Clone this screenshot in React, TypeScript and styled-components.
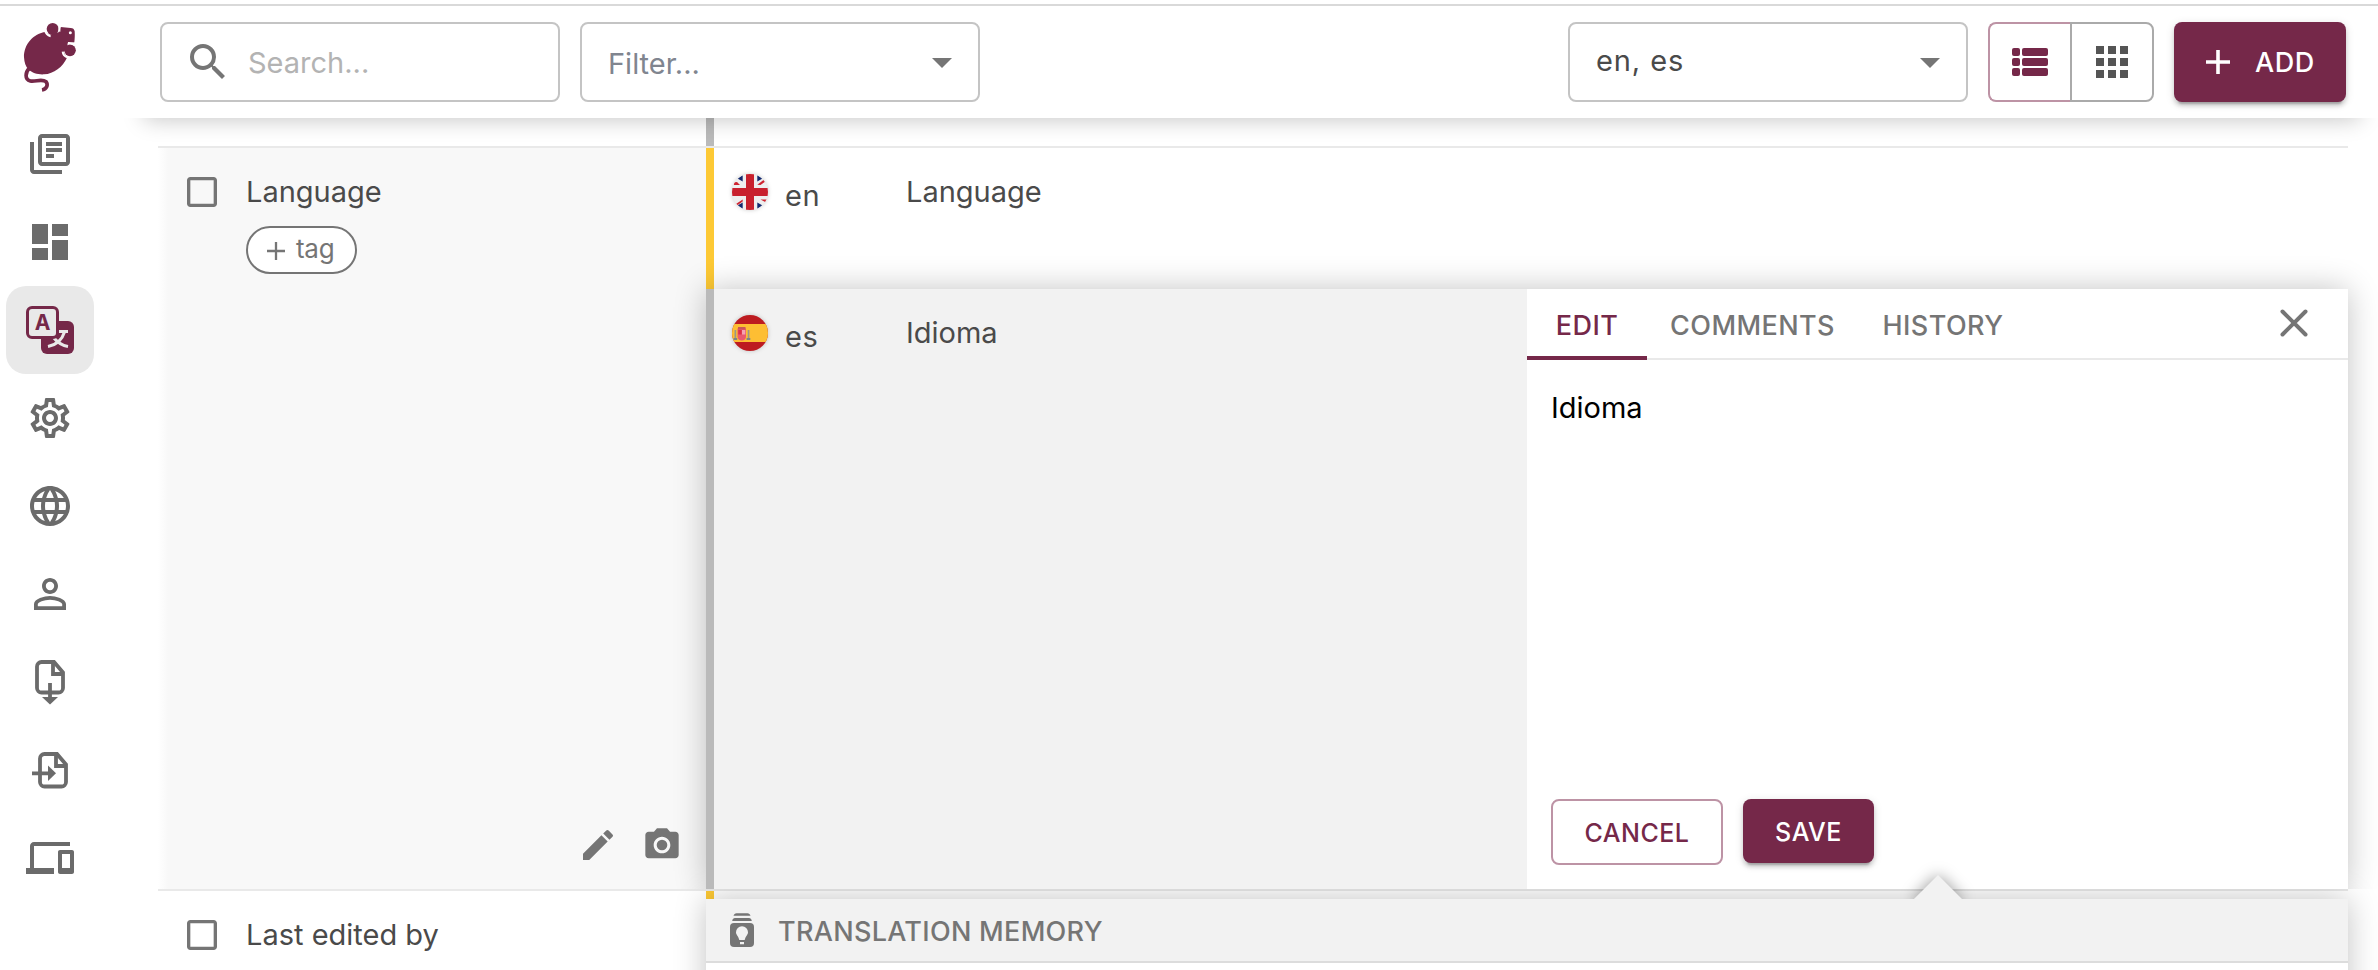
import React from 'react';
import styled, { createGlobalStyle, css } from 'styled-components';
import {
  MdApps,
  MdArrowDropDown,
  MdCameraAlt,
  MdCheckBoxOutlineBlank,
  MdDashboard,
  MdDevices,
  MdEdit,
  MdLanguage,
  MdOutlineLibraryBooks,
  MdOutlineSettings,
  MdPersonOutline,
  MdSearch,
} from 'react-icons/md';

const color = {
  primary: '#752849',
  primarySoft: '#bd93a5',
  icon: '#6b6b6b',
  muted: '#757575',
  text: '#4a4a4a',
  border: '#c4c4c4',
  divider: '#e9e9e9',
  keyCell: '#f8f8f8',
  selected: '#f2f2f2',
  translated: '#fdc935',
  reviewed: '#bababa',
};

const GlobalStyle = createGlobalStyle`
  *, *::before, *::after { box-sizing: border-box; }
  body {
    margin: 0;
    background: #fff;
    color: ${color.text};
    font-family: Inter, "Liberation Sans", sans-serif;
    font-size: 29px;
    line-height: 40px;
  }
`;

const Page = styled.div`
  display: flex;
  flex-direction: column;
  height: 970px;
  overflow: hidden;
  padding-top: 4px;
`;

const TopRule = styled.div`
  flex: none;
  height: 2px;
  background: #d9d9d9;
`;

const Shell = styled.div`
  display: flex;
  flex: 1;
  min-height: 0;
`;

/* Sidebar */

const Sidebar = styled.nav`
  flex: none;
  width: 100px;
  display: flex;
  flex-direction: column;
  align-items: center;
`;

const LogoBox = styled.div`
  height: 104px;
  padding-top: 4px;
  svg { display: block; }
`;

const MenuItem = styled.a<{ $active?: boolean }>`
  width: 88px;
  height: 88px;
  flex: none;
  display: flex;
  align-items: center;
  justify-content: center;
  border-radius: 20px;
  color: ${(p) => (p.$active ? color.primary : color.icon)};
  background: ${(p) => (p.$active ? '#e9e9e9' : 'transparent')};
`;

/* Toolbar */

const Main = styled.main`
  flex: 1;
  min-width: 0;
  display: flex;
  flex-direction: column;
`;

const Toolbar = styled.header`
  position: relative;
  z-index: 5;
  flex: none;
  height: 112px;
  padding: 16px 32px 16px 60px;
  display: flex;
  gap: 20px;
  background: #fff;
`;

const ShadowStrip = styled.div`
  position: absolute;
  top: 100%;
  left: 0;
  right: 0;
  height: 28px;
  overflow: hidden;
  pointer-events: none;
`;

const ShadowCaster = styled.div`
  height: 40px;
  margin: -40px 18px 0 44px;
  box-shadow: 0 2px 22px rgba(0, 0, 0, 0.22);
`;

const Field = styled.div<{ $push?: boolean }>`
  width: 400px;
  height: 80px;
  display: flex;
  align-items: center;
  border: 2px solid ${color.border};
  border-radius: 8px;
  ${(p) => p.$push && css`margin-left: auto;`}
`;

const SearchField = styled(Field)`
  padding-left: 22px;
  gap: 16px;
  color: ${color.muted};
`;

const SelectField = styled(Field)`
  padding: 0 12px 0 26px;
  justify-content: space-between;
  color: ${color.muted};
`;

const FieldText = styled.span<{ $color: string; $shift?: number; $spacing?: number }>`
  line-height: 40px;
  color: ${(p) => p.$color};
  letter-spacing: ${(p) => p.$spacing ?? 0}px;
  transform: translateY(${(p) => p.$shift ?? 0}px);
`;

const ToggleGroup = styled.div`
  display: flex;
  width: 166px;
`;

const ToggleButton = styled.button<{ $active?: boolean }>`
  width: ${(p) => (p.$active ? 82 : 84)}px;
  display: flex;
  align-items: center;
  justify-content: center;
  padding: 0;
  background: #fff;
  border: 2px solid ${(p) => (p.$active ? color.primarySoft : '#aaa')};
  color: ${(p) => (p.$active ? color.primary : '#555')};
  border-radius: ${(p) => (p.$active ? '8px 0 0 8px' : '0 8px 8px 0')};
  ${(p) => p.$active && css`border-right: 0;`}
`;

const buttonType = css`
  font-family: inherit;
  font-weight: 450;
  font-size: 25px;
  line-height: 40px;
  letter-spacing: 0.5px;
  border-radius: 8px;
`;

const raised = css`
  border: 0;
  color: #fff;
  background: ${color.primary};
  box-shadow: 0 6px 2px -4px rgba(0, 0, 0, 0.2), 0 4px 4px rgba(0, 0, 0, 0.14),
    0 2px 10px rgba(0, 0, 0, 0.12);
`;

const AddButton = styled.button`
  ${buttonType}
  ${raised}
  width: 172px;
  height: 80px;
  padding: 0 0 0 32px;
  font-size: 27px;
  display: flex;
  align-items: center;
  gap: 25px;
`;

const AddLabel = styled.span`
  padding-top: 2px;
`;

/* Translation table */

const Table = styled.div`
  flex: 1;
  margin: 0 30px 0 58px;
`;

const KeyRow = styled.section<{ $height: number }>`
  position: relative;
  height: ${(p) => p.$height}px;
  display: grid;
  grid-template-columns: 548px 1fr;
  border-bottom: 2px solid ${color.divider};
`;

const KeyCell = styled.div<{ $active?: boolean }>`
  display: flex;
  flex-direction: column;
  justify-content: space-between;
  ${(p) =>
    p.$active &&
    css`background: linear-gradient(90deg, #fff, ${color.keyCell} 10px);`}
`;

const KeyHead = styled.div`
  display: flex;
  align-items: flex-start;
  padding: 24px 0 0 24px;
  gap: 24px;
  svg { display: block; color: ${color.muted}; }
`;

const KeyInfo = styled.div`
  display: flex;
  flex-direction: column;
  align-items: flex-start;
`;

const KeyName = styled.span`
  line-height: 40px;
`;

const TagButton = styled.button`
  margin-top: 14px;
  width: 111px;
  height: 48px;
  padding: 0 0 3px 19px;
  display: flex;
  align-items: center;
  gap: 11px;
  border: 2px solid ${color.muted};
  border-radius: 24px;
  background: #fff;
  color: ${color.muted};
  font: inherit;
  font-size: 26px;
  line-height: 36px;
  letter-spacing: -0.3px;
  svg { margin-top: 4px; }
`;

const KeyActions = styled.div`
  display: flex;
  justify-content: flex-end;
  gap: 24px;
  padding: 0 24px 24px 0;
  color: ${color.muted};
`;

const Translations = styled.div`
  display: flex;
  flex-direction: column;
`;

const Translation = styled.article<{ $state: string; $height: number; $selected?: boolean }>`
  height: ${(p) => p.$height}px;
  display: flex;
  border-left: 8px solid ${(p) => p.$state};
  ${(p) =>
    p.$selected &&
    css`
      position: relative;
      z-index: 2;
      background: ${color.selected};
      box-shadow: 0 0 30px rgba(0, 0, 0, 0.24);
      clip-path: inset(-40px -40px 0 -40px);
    `}
`;

const Language = styled.div`
  width: 174px;
  height: 36px;
  margin: 26px 0 0 18px;
  display: flex;
  gap: 17px;
  svg { display: block; filter: drop-shadow(0 0 2px rgba(0, 0, 0, 0.2)); }
`;

const LangCode = styled.span`
  margin-top: 2px;
  letter-spacing: 0.5px;
`;

const Value = styled.span`
  flex: 1;
  margin-top: 24px;
`;

/* Editor */

const Editor = styled.div`
  width: 821px;
  display: flex;
  flex-direction: column;
  background: #fff;
`;

const TabBar = styled.div`
  height: 71px;
  display: flex;
  align-items: stretch;
  border-bottom: 2px solid ${color.divider};
`;

const Tab = styled.button<{ $active?: boolean; $width: number }>`
  width: ${(p) => p.$width}px;
  height: 71px;
  padding: 6px 0 0;
  border: 0;
  border-bottom: 4px solid ${(p) => (p.$active ? color.primary : 'transparent')};
  background: none;
  color: ${(p) => (p.$active ? color.primary : color.muted)};
  font: inherit;
  font-weight: 450;
  font-size: 27px;
  letter-spacing: 0.4px;
`;

const CloseButton = styled.button`
  margin: 19px 39px 0 auto;
  width: 30px;
  height: 30px;
  padding: 0;
  border: 0;
  background: none;
  color: ${color.muted};
  svg { display: block; }
`;

const EditorText = styled.div`
  flex: 1;
  padding: 28px 24px;
  color: #000;
`;

const EditorActions = styled.div`
  display: flex;
  align-items: flex-start;
  gap: 20px;
  padding: 0 24px 24px;
`;

const CancelButton = styled.button`
  ${buttonType}
  width: 172px;
  height: 66px;
  padding: 1px 0 0;
  background: #fff;
  color: ${color.primary};
  border: 2px solid ${color.primarySoft};
`;

const SaveButton = styled.button`
  ${buttonType}
  ${raised}
  width: 131px;
  height: 64px;
  padding: 2px 0 0;
`;

/* Tools popup */

const ToolsPopup = styled.aside`
  position: absolute;
  z-index: 1;
  top: 8px;
  left: 548px;
  right: 0;
  height: 120px;
  background: #fff;
  box-shadow: 0 0 30px rgba(0, 0, 0, 0.24);
`;

const ToolsHeader = styled.div`
  height: 64px;
  display: flex;
  align-items: center;
  gap: 24px;
  padding-left: 24px;
  background: ${color.selected};
  border-bottom: 2px solid #dcdcdc;
  color: ${color.muted};
  font-weight: 450;
  font-size: 27px;
  letter-spacing: 0.3px;
`;

const ToolsTitle = styled.span`
  padding-top: 3px;
`;

const ArrowClip = styled.div`
  position: absolute;
  z-index: 3;
  top: -36px;
  left: 1730px;
  width: 100px;
  height: 44px;
  overflow: hidden;
  &::after {
    content: '';
    position: absolute;
    left: 33px;
    top: 27px;
    width: 34px;
    height: 34px;
    background: ${color.selected};
    transform: rotate(45deg);
    box-shadow: 0 0 16px rgba(0, 0, 0, 0.4);
  }
`;

const MouseLogo = () => (
  <svg width="100" height="100" viewBox="0 0 300 300" fill={color.primary}>
    <path d="M137 66C100 70 71 104 72 142c1 16 5 28 13 36 12 12 30 16 47 15 30-2 56-22 69-50l-10-16 12-22c-2-4 0-7 3-7l17-1c1-8 2-20 1-33-2-7-5-10-12-10l-30-3-6 16-30 8z" />
    <circle cx="158" cy="57" r="18" />
    <circle cx="210" cy="121" r="17.5" />
    <path d="M136 63c1 8 6 13 16 16M179 46l-1 19M188 125c1 9 6 14 13 17M204 99c7-1 14 1 20 5" fill="none" stroke="#fff" strokeWidth="6" />
    <circle cx="211" cy="68" r="4.5" fill="#fff" />
    <path d="M88 175C76 186 73 208 91 213c16 3 34-8 47 2 8 11 1 23-12 25" fill="none" stroke={color.primary} strokeWidth="11" />
  </svg>
);

const TranslateIcon = () => (
  <svg width="48" height="48" viewBox="0 0 48 48">
    <rect x="15" y="15" width="33" height="33" rx="6" fill="currentColor" />
    <g fill="none" stroke="#e9e9e9" strokeWidth="3">
      <path d="M29 25.500H42" />
      <path d="M38.500 26C36 34 30 39 22 40.500" />
      <path d="M27 31c4 5 9 8.500 15 9.500" />
    </g>
    <rect x="1.500" y="1.500" width="30" height="30" rx="4.500" fill="#e9e9e9" stroke="currentColor" strokeWidth="3" />
    <text x="16.500" y="24" textAnchor="middle" fontSize="21" fontWeight="700" fill="currentColor">A</text>
  </svg>
);

const ExportIcon = () => (
  <svg width="48" height="48" viewBox="0 0 48 48">
    <g fill="none" stroke="currentColor" strokeWidth="3.800">
      <path d="M15.500 4H28l9 10.500V30a4.500 4.500 0 0 1-4.500 4.500h-17A4.500 4.500 0 0 1 11 30V8.500A4.500 4.500 0 0 1 15.500 4z" />
      <path d="M27 4v12h10M24 25v15" />
    </g>
    <path d="M16 39h16l-8 7.500z" fill="currentColor" />
  </svg>
);

const ImportIcon = () => (
  <svg width="48" height="48" viewBox="0 0 48 48">
    <g fill="none" stroke="currentColor" strokeWidth="3.800">
      <path d="M18.500 8H31l9 10.500V36a4.500 4.500 0 0 1-4.500 4.500h-17A4.500 4.500 0 0 1 14 36V12.500A4.500 4.500 0 0 1 18.500 8z" />
      <path d="M30 8v12h10M6 27.300h18" />
    </g>
    <path d="M22 19.500v15.500l8-7.700z" fill="currentColor" />
  </svg>
);

const ListIcon = () => (
  <svg width="36" height="28" viewBox="0 0 36 28" fill="currentColor">
    {[0, 10, 20].map((y) => (
      <React.Fragment key={y}>
        <rect x="0" y={y} width="8" height="8" rx="2" />
        <rect x="10" y={y} width="26" height="8" rx="2" />
      </React.Fragment>
    ))}
  </svg>
);

const PlusIcon = ({ size, weight }: { size: number; weight: number }) => (
  <svg width={size} height={size} viewBox={`0 0 ${size} ${size}`} stroke="currentColor" strokeWidth={weight}>
    <path d={`M0 ${size / 2}H${size}M${size / 2} 0V${size}`} />
  </svg>
);

const CloseIcon = () => (
  <svg width="30" height="30" viewBox="0 0 30 30" stroke="currentColor" strokeWidth="4" strokeLinecap="round">
    <path d="M3.500 3.500l23 23M26.500 3.500l-23 23" />
  </svg>
);

const MemoryIcon = () => (
  <svg width="24" height="34" viewBox="0 0 24 34" fill="currentColor">
    <path d="M3.500 2.800C4 1 5 .2 6.500 .2h11c1.500 0 2.500.8 3 2.600zM2.200 8C2.600 6 3.500 5.100 5 5.100h14c1.500 0 2.400.9 2.800 2.900z" />
    <rect y="10" width="24" height="24" rx="4" />
    <path d="M12 13.300a6 6 0 0 0-6 6c0 2.600 2.500 4 3.300 7.700h5.400C15.500 23.300 18 21.900 18 19.300a6 6 0 0 0-6-6zM10 29h4v2.300h-4z" fill={color.selected} />
  </svg>
);

const FlagEn = () => (
  <svg width="36" height="36" viewBox="0 0 36 36">
    <clipPath id="flag-en"><circle cx="18" cy="18" r="18" /></clipPath>
    <g clipPath="url(#flag-en)">
      <rect width="36" height="36" fill="#eee" />
      <path d="M10.700 1v6.500L5.500 4.500zM25.300 1v6.500l5.200-3zM10.700 35v-6.500l-5.200 3zM25.300 35v-6.500l5.200 3z" fill="#13296f" />
      <path d="M1 8.500l4-.5 3 3H2zM25.300 10.700l6.500-5 1.200 2-4.500 3.300zM10.700 25.500l-7.500 5 1 1.500 6.500-4.500zM28.500 25.500H35v3.500z" fill="#cf2430" />
      <path d="M14 0h8v14h14v8H22v14h-8V22H0v-8h14z" fill="#c8202d" />
    </g>
  </svg>
);

const FlagEs = () => (
  <svg width="36" height="36" viewBox="0 0 36 36">
    <clipPath id="flag-es"><circle cx="18" cy="18" r="18" /></clipPath>
    <g clipPath="url(#flag-es)">
      <rect width="36" height="36" fill="#bd1b20" />
      <rect y="9" width="36" height="18" fill="#fdbe33" />
      <path d="M2.500 15h1.700v8H2.500zM15.700 15h1.700v8h-1.700z" fill="#99978a" />
      <path d="M1.500 23h3.700v2H1.500zM14.600 23h3.700v2h-3.700z" fill="#7c8388" />
      <path d="M5.500 13.500h8.500v8c0 2.500-1.800 4-4.200 4s-4.300-1.500-4.300-4z" fill="#ea596e" />
      <path d="M6 12h7.500v2.500H6z" fill="#c9575a" />
      <path d="M9.800 15h3.500v4.500H9.800z" fill="#f4a2b2" />
      <path d="M6.300 15h3.500v4.500H6.300z" fill="#dd2e44" />
    </g>
  </svg>
);

const menu = [
  { id: 'projects', icon: <MdOutlineLibraryBooks size={48} /> },
  { id: 'dashboard', icon: <MdDashboard size={48} /> },
  { id: 'translations', icon: <TranslateIcon /> },
  { id: 'settings', icon: <MdOutlineSettings size={48} /> },
  { id: 'languages', icon: <MdLanguage size={48} /> },
  { id: 'members', icon: <MdPersonOutline size={48} /> },
  { id: 'export', icon: <ExportIcon /> },
  { id: 'import', icon: <ImportIcon /> },
  { id: 'integrate', icon: <MdDevices size={48} /> },
];

export default function App() {
  return (
    <Page>
      <GlobalStyle />
      <TopRule />
      <Shell>
        <Sidebar>
          <LogoBox><MouseLogo /></LogoBox>
          {menu.map((m) => (
            <MenuItem key={m.id} $active={m.id === 'translations'}>{m.icon}</MenuItem>
          ))}
        </Sidebar>
        <Main>
          <Toolbar>
            <SearchField>
              <MdSearch size={48} />
              <FieldText $color="#b3b3b3" $shift={1}>Search...</FieldText>
            </SearchField>
            <SelectField>
              <FieldText $color="#80858f" $shift={2}>Filter...</FieldText>
              <MdArrowDropDown size={48} />
            </SelectField>
            <SelectField $push>
              <FieldText $color={color.text} $shift={-1} $spacing={0.9}>en, es</FieldText>
              <MdArrowDropDown size={48} />
            </SelectField>
            <ToggleGroup>
              <ToggleButton $active><ListIcon /></ToggleButton>
              <ToggleButton><MdApps size={48} /></ToggleButton>
            </ToggleGroup>
            <AddButton><PlusIcon size={24} weight={3.6} /><AddLabel>ADD</AddLabel></AddButton>
            <ShadowStrip><ShadowCaster /></ShadowStrip>
          </Toolbar>
          <Table>
            <KeyRow $height={30}>
              <KeyCell />
              <Translation $state={color.reviewed} $height={28} />
            </KeyRow>
            <KeyRow $height={743}>
              <KeyCell $active>
                <KeyHead>
                  <MdCheckBoxOutlineBlank size={40} />
                  <KeyInfo>
                    <KeyName>Language</KeyName>
                    <TagButton><PlusIcon size={18} weight={2.3} />tag</TagButton>
                  </KeyInfo>
                </KeyHead>
                <KeyActions>
                  <MdEdit size={40} />
                  <MdCameraAlt size={40} />
                </KeyActions>
              </KeyCell>
              <Translations>
                <Translation $state={color.translated} $height={141}>
                  <Language><FlagEn /><LangCode>en</LangCode></Language>
                  <Value>Language</Value>
                </Translation>
                <Translation $state={color.reviewed} $height={600} $selected>
                  <Language><FlagEs /><LangCode>es</LangCode></Language>
                  <Value>Idioma</Value>
                  <Editor>
                    <TabBar>
                      <Tab $active $width={120}>EDIT</Tab>
                      <Tab $width={211}>COMMENTS</Tab>
                      <Tab $width={170}>HISTORY</Tab>
                      <CloseButton><CloseIcon /></CloseButton>
                    </TabBar>
                    <EditorText>Idioma</EditorText>
                    <EditorActions>
                      <CancelButton>CANCEL</CancelButton>
                      <SaveButton>SAVE</SaveButton>
                    </EditorActions>
                  </Editor>
                </Translation>
              </Translations>
            </KeyRow>
            <KeyRow $height={100}>
              <KeyCell>
                <KeyHead>
                  <MdCheckBoxOutlineBlank size={40} />
                  <KeyName>Last edited by</KeyName>
                </KeyHead>
              </KeyCell>
              <Translation $state={color.translated} $height={98} />
              <ToolsPopup>
                <ToolsHeader><MemoryIcon /><ToolsTitle>TRANSLATION MEMORY</ToolsTitle></ToolsHeader>
              </ToolsPopup>
              <ArrowClip />
            </KeyRow>
          </Table>
        </Main>
      </Shell>
    </Page>
  );
}
